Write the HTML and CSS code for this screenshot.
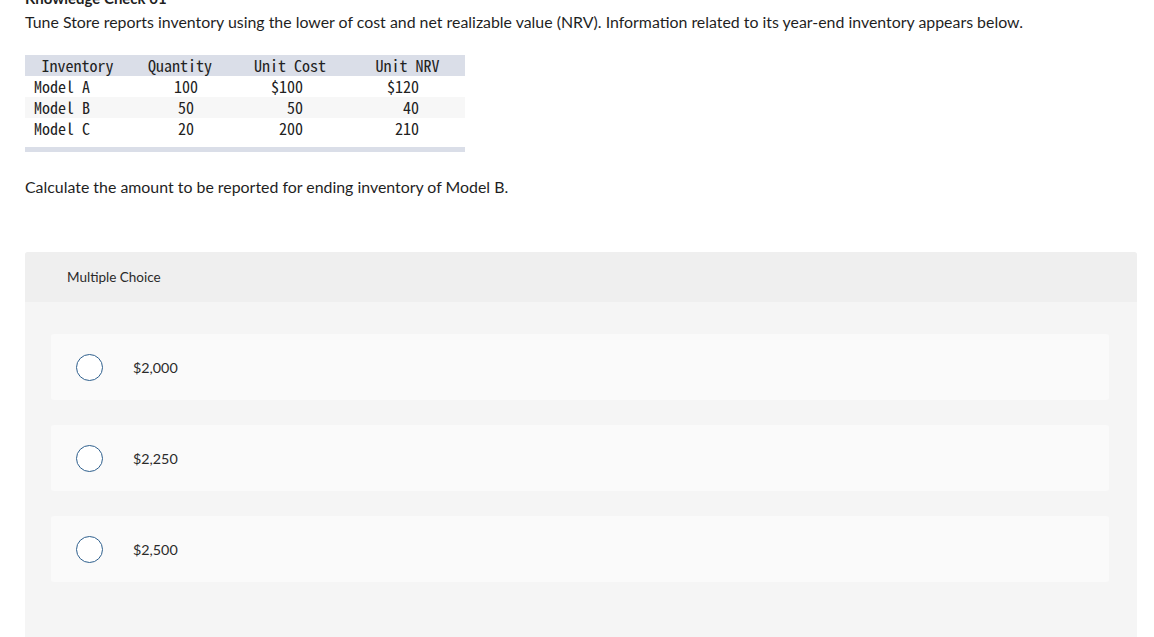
FILE: index.html
```html
<!DOCTYPE html>
<html>
<head>
<meta charset="utf-8">
<link rel="stylesheet" href="styles.css">
</head>
<body>
<div class="page">
  <h2 class="kc-title">Knowledge Check 01</h2>
  <p class="intro">Tune Store reports inventory using the lower of cost and net realizable value (NRV). Information related to its year-end inventory appears below.</p>

  <table class="inv">
    <colgroup>
      <col class="c1">
      <col class="c2">
      <col class="c3">
      <col class="c4">
    </colgroup>
    <thead>
      <tr>
        <th>Inventory</th>
        <th>Quantity</th>
        <th>Unit Cost</th>
        <th>Unit NRV</th>
      </tr>
    </thead>
    <tbody>
      <tr>
        <td class="d1">Model A</td>
        <td class="d2">100</td>
        <td class="d3">$100</td>
        <td class="d4">$120</td>
      </tr>
      <tr class="alt">
        <td class="d1">Model B</td>
        <td class="d2">50</td>
        <td class="d3">50</td>
        <td class="d4">40</td>
      </tr>
      <tr>
        <td class="d1">Model C</td>
        <td class="d2">20</td>
        <td class="d3">200</td>
        <td class="d4">210</td>
      </tr>
    </tbody>
  </table>
  <div class="inv-foot"></div>

  <p class="question">Calculate the amount to be reported for ending inventory of Model B.</p>

  <div class="mc">
    <div class="mc-head">Multiple Choice</div>
    <div class="mc-body">
      <label class="opt"><span class="radio"></span><span class="opt-text">$2,000</span></label>
      <label class="opt"><span class="radio"></span><span class="opt-text">$2,250</span></label>
      <label class="opt"><span class="radio"></span><span class="opt-text">$2,500</span></label>
    </div>
  </div>
</div>
</body>
</html>
```
FILE: styles.css
```css
html, body {
  margin: 0;
  padding: 0;
  background: #ffffff;
}
body {
  font-family: "Lato", "Liberation Sans", sans-serif;
  color: #1f1f1f;
  overflow: hidden;
  height: 637px;
}
.page {
  padding: 0 17px 0 25px;
}
.kc-title {
  margin: -10px 0 0 0;
  font-size: 15px;
  line-height: 16px;
  font-weight: 700;
  color: #1f1f1f;
}
.intro {
  margin: 0;
  font-size: 15.9px;
  line-height: 20px;
  padding-top: 6px;
}
.inv {
  margin-top: 23px;
  width: 440px;
  table-layout: fixed;
  border-collapse: collapse;
  font-family: "Noto Sans Mono CJK SC", "Liberation Mono", monospace;
  font-size: 16px;
  color: #222;
}
.inv th, .inv td {
  height: 21px;
  padding: 0;
  font-weight: 400;
  line-height: 21px;
  white-space: pre;
}
.inv thead tr {
  background: #dadee8;
}
.inv tr.alt {
  background: #f7f7f7;
}
.inv th { text-align: center; }
.inv col.c1 { width: 105px; }
.inv col.c2 { width: 100px; }
.inv col.c3 { width: 120px; }
.inv col.c4 { width: 115px; }
.inv td.d1 { text-align: left; padding-left: 9px; }
.inv td.d2 { text-align: center; padding-left: 12px; }
.inv td.d3 { text-align: right; padding-right: 47px; }
.inv td.d4 { text-align: right; padding-right: 46px; }
.inv-foot {
  margin-top: 8px;
  width: 440px;
  height: 5px;
  background: #dadee8;
}
.question {
  margin: 25px 0 0 0;
  font-size: 15.9px;
  line-height: 20px;
}
.mc {
  margin-top: 55px;
  background: #f5f5f5;
  border-radius: 3px;
  overflow: hidden;
  height: 400px;
}
.mc-head {
  height: 50px;
  background: #efefef;
  display: flex;
  align-items: center;
  padding-left: 42px;
  font-size: 13.5px;
  color: #2a2a2a;
}
.mc-body {
  padding: 32px 28px 0 26px;
  display: flex;
  flex-direction: column;
  gap: 25px;
}
.opt {
  height: 66px;
  background: #fafafa;
  border-radius: 3px;
  display: flex;
  align-items: center;
  padding-left: 25px;
  gap: 30px;
}
.radio {
  width: 25px;
  height: 25px;
  border: 1.5px solid #2e5f8d;
  border-radius: 50%;
  background: #ffffff;
  flex: none;
}
.opt-text {
  font-size: 14.3px;
  color: #2a2a2a;
}
```
